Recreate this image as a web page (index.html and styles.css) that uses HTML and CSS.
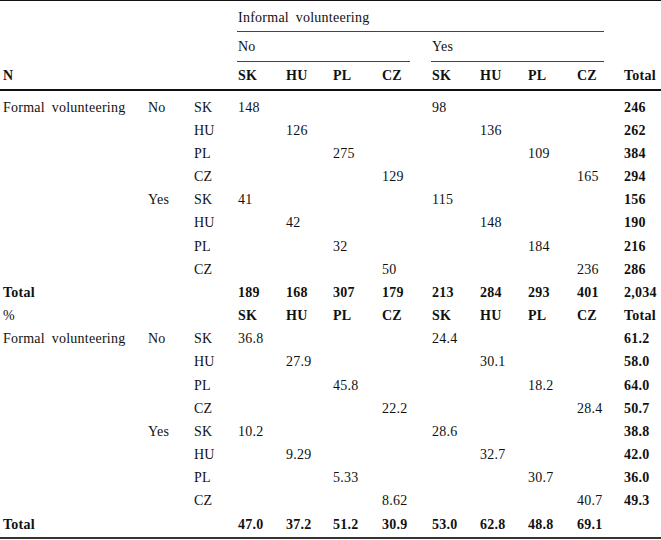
FILE: index.html
```html
<!DOCTYPE html>
<html>
<head>
<meta charset="utf-8">
<link rel="stylesheet" href="styles.css">
</head>
<body>
<table class="tbl">
  <colgroup>
    <col class="c-label"><col class="c-yn"><col class="c-cty">
    <col class="c-d1"><col class="c-d2"><col class="c-d3"><col class="c-d4">
    <col class="c-d5"><col class="c-d6"><col class="c-d7"><col class="c-d8">
    <col class="c-tot">
  </colgroup>
  <thead>
    <tr class="h1">
      <th></th><th></th><th></th>
      <th colspan="8" class="grp"><div class="txt">Informal volunteering</div><div class="rule r-wide"></div></th>
      <th></th>
    </tr>
    <tr class="h2">
      <th></th><th></th><th></th>
      <th colspan="4" class="grp"><div class="txt">No</div><div class="rule r-no"></div></th>
      <th colspan="4" class="grp"><div class="txt">Yes</div><div class="rule r-yes"></div></th>
      <th></th>
    </tr>
    <tr class="h3">
      <th class="b">N</th><th></th><th></th>
      <th class="b">SK</th><th class="b">HU</th><th class="b">PL</th><th class="b">CZ</th>
      <th class="b">SK</th><th class="b">HU</th><th class="b">PL</th><th class="b">CZ</th>
      <th class="b">Total</th>
    </tr>
  </thead>
  <tbody>
    <tr class="first"><td>Formal volunteering</td><td>No</td><td>SK</td><td>148</td><td></td><td></td><td></td><td>98</td><td></td><td></td><td></td><td class="b">246</td></tr>
    <tr><td></td><td></td><td>HU</td><td></td><td>126</td><td></td><td></td><td></td><td>136</td><td></td><td></td><td class="b">262</td></tr>
    <tr><td></td><td></td><td>PL</td><td></td><td></td><td>275</td><td></td><td></td><td></td><td>109</td><td></td><td class="b">384</td></tr>
    <tr><td></td><td></td><td>CZ</td><td></td><td></td><td></td><td>129</td><td></td><td></td><td></td><td>165</td><td class="b">294</td></tr>
    <tr><td></td><td>Yes</td><td>SK</td><td>41</td><td></td><td></td><td></td><td>115</td><td></td><td></td><td></td><td class="b">156</td></tr>
    <tr><td></td><td></td><td>HU</td><td></td><td>42</td><td></td><td></td><td></td><td>148</td><td></td><td></td><td class="b">190</td></tr>
    <tr><td></td><td></td><td>PL</td><td></td><td></td><td>32</td><td></td><td></td><td></td><td>184</td><td></td><td class="b">216</td></tr>
    <tr><td></td><td></td><td>CZ</td><td></td><td></td><td></td><td>50</td><td></td><td></td><td></td><td>236</td><td class="b">286</td></tr>
    <tr class="b"><td>Total</td><td></td><td></td><td>189</td><td>168</td><td>307</td><td>179</td><td>213</td><td>284</td><td>293</td><td>401</td><td>2,034</td></tr>
    <tr><td>%</td><td></td><td></td><td class="b">SK</td><td class="b">HU</td><td class="b">PL</td><td class="b">CZ</td><td class="b">SK</td><td class="b">HU</td><td class="b">PL</td><td class="b">CZ</td><td class="b">Total</td></tr>
    <tr><td>Formal volunteering</td><td>No</td><td>SK</td><td>36.8</td><td></td><td></td><td></td><td>24.4</td><td></td><td></td><td></td><td class="b">61.2</td></tr>
    <tr><td></td><td></td><td>HU</td><td></td><td>27.9</td><td></td><td></td><td></td><td>30.1</td><td></td><td></td><td class="b">58.0</td></tr>
    <tr><td></td><td></td><td>PL</td><td></td><td></td><td>45.8</td><td></td><td></td><td></td><td>18.2</td><td></td><td class="b">64.0</td></tr>
    <tr><td></td><td></td><td>CZ</td><td></td><td></td><td></td><td>22.2</td><td></td><td></td><td></td><td>28.4</td><td class="b">50.7</td></tr>
    <tr><td></td><td>Yes</td><td>SK</td><td>10.2</td><td></td><td></td><td></td><td>28.6</td><td></td><td></td><td></td><td class="b">38.8</td></tr>
    <tr><td></td><td></td><td>HU</td><td></td><td>9.29</td><td></td><td></td><td></td><td>32.7</td><td></td><td></td><td class="b">42.0</td></tr>
    <tr><td></td><td></td><td>PL</td><td></td><td></td><td>5.33</td><td></td><td></td><td></td><td>30.7</td><td></td><td class="b">36.0</td></tr>
    <tr><td></td><td></td><td>CZ</td><td></td><td></td><td></td><td>8.62</td><td></td><td></td><td></td><td>40.7</td><td class="b">49.3</td></tr>
    <tr class="b last"><td>Total</td><td></td><td></td><td>47.0</td><td>37.2</td><td>51.2</td><td>30.9</td><td>53.0</td><td>62.8</td><td>48.8</td><td>69.1</td><td></td></tr>
  </tbody>
</table>
</body>
</html>
```

FILE: styles.css
```css
html, body {
  margin: 0;
  padding: 0;
  background: #fff;
}

body {
  font-family: "Liberation Serif", "Times New Roman", serif;
  font-size: 14px;
  color: #111;
  letter-spacing: 0.25px;
  word-spacing: 3px;
}

.tbl {
  width: 661px;
  table-layout: fixed;
  border-collapse: collapse;
  border-top: 1px solid #111;
  border-bottom: 2px solid #333;
}

.c-label { width: 148px; }
.c-yn { width: 46px; }
.c-cty { width: 44px; }
.c-d1 { width: 48px; }
.c-d2 { width: 47px; }
.c-d3 { width: 49px; }
.c-d4 { width: 50px; }
.c-d5 { width: 48px; }
.c-d6 { width: 48px; }
.c-d7 { width: 49px; }
.c-d8 { width: 47px; }
.c-tot { width: 37px; }

.tbl th,
.tbl td {
  padding: 0;
  text-align: left;
  vertical-align: top;
  font-weight: normal;
  line-height: 23.17px;
  white-space: nowrap;
}

.tbl th:first-child,
.tbl td:first-child {
  padding-left: 3px;
}

.tbl .b,
.tbl tr.b td {
  font-weight: bold;
}

.tbl .h1 th { padding-top: 5px; }
.h1 .txt { padding-bottom: 2px; }
.tbl .h2 th { padding-top: 3px; }
.h2 .txt { padding-bottom: 3px; }
.tbl .h3 th {
  padding-top: 2px;
  padding-bottom: 1px;
  border-bottom: 2px solid #111;
}

.rule {
  height: 0;
  border-top: 1px solid #444;
  margin-left: -1px;
}
.r-wide { margin-right: 20px; }
.r-no { margin-right: 22px; }
.r-yes { margin-right: 20px; }

.tbl .first td { padding-top: 5px; }
.tbl .last td { padding-bottom: 1px; }
```
